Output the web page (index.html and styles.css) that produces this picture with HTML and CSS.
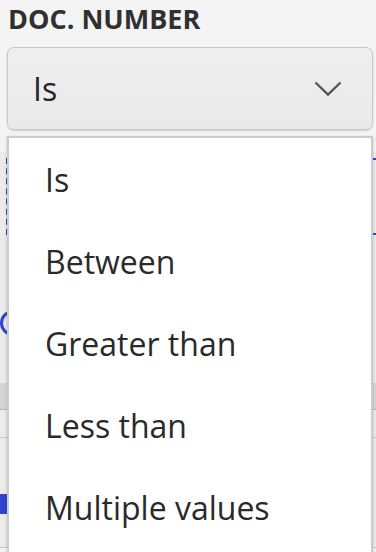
FILE: index.html
```
<!DOCTYPE html>
<html lang="en">
<head>
    <meta charset="UTF-8">
    <meta name="viewport" content="width=device-width, initial-scale=1.0">
    <title>Doc. number filter</title>
    <link rel="stylesheet" href="styles.css">
</head>
<body>
    <div class="filter">
        <div class="filter__label">DOC. NUMBER</div>
        <div class="select">
            <span class="select__value">Is</span>
            <svg class="select__chevron" width="28" height="16" viewBox="0 0 28 16">
                <path d="M1.5 1.5 L14 13.5 L26.5 1.5" fill="none" stroke="#555" stroke-width="2.4"/>
            </svg>
        </div>

        <!-- content behind the open menu -->
        <div class="panel">
            <div class="panel__input"></div>
            <div class="panel__radio"></div>
        </div>
        <div class="table">
            <div class="table__head"></div>
            <div class="table__row"></div>
            <div class="table__row table__row--tall"><span class="table__check"></span></div>
        </div>

        <ul class="menu">
            <li class="menu__item">Is</li>
            <li class="menu__item">Between</li>
            <li class="menu__item">Greater than</li>
            <li class="menu__item">Less than</li>
            <li class="menu__item">Multiple values</li>
        </ul>
    </div>
</body>
</html>
```

FILE: styles.css
```
* {
   padding: 0;
   margin: 0;
   box-sizing: border-box;
}

body {
   font-family: "Open Sans", "Noto Sans", sans-serif;
   color: #2b2b2b;
   background-color: #f4f4f4;
   overflow: hidden;
}

.filter {
   position: relative;
   height: 552px;
   overflow: hidden;
}

.filter__label {
   padding-left: 8px;
   height: 47px;
   font-size: 27px;
   font-weight: 700;
   color: #303030;
}

.select {
   margin: 0 3px 0 7px;
   height: 83px;
   display: flex;
   align-items: center;
   justify-content: space-between;
   padding: 0 30px 0 25px;
   border: 1px solid #c6c6c6;
   border-radius: 7px;
   background: linear-gradient(#efefef, #e9e9e9);
   box-shadow: 0 1px 2px rgba(0, 0, 0, 0.15);
}

.select__value {
   font-size: 32px;
   color: #262626;
}

.panel {
   margin-top: 22px;
   height: 231px;
   padding-top: 6px;
   background-color: #ebebeb;
}

.panel__input {
   height: 77px;
   margin-left: 6px;
   border: 2px dashed #3344cc;
   border-right-style: none;
}

.panel__radio {
   width: 26px;
   height: 26px;
   margin-top: 75px;
   border: 3px solid #3344cc;
   border-radius: 50%;
}

.table__head {
   height: 27px;
   background-color: #d5d5d1;
   border-bottom: 1px solid #b8b8b8;
}

.table__row {
   height: 28px;
   background-color: #ececec;
   border-bottom: 1px solid #c8c8c8;
}

.table__row--tall {
   height: 110px;
   padding-top: 56px;
}

.table__check {
   display: block;
   width: 8px;
   height: 20px;
   background-color: #3344cc;
}

.menu {
   position: absolute;
   top: 136px;
   left: 7px;
   width: 366px;
   height: 420px;
   list-style: none;
   background-color: #ffffff;
   border: 2px solid #cccccc;
   box-shadow: 0 1px 3px rgba(0, 0, 0, 0.2);
}

.menu__item {
   height: 82px;
   display: flex;
   align-items: center;
   padding-left: 36px;
   font-size: 32px;
   color: #2a2a2a;
}
```
